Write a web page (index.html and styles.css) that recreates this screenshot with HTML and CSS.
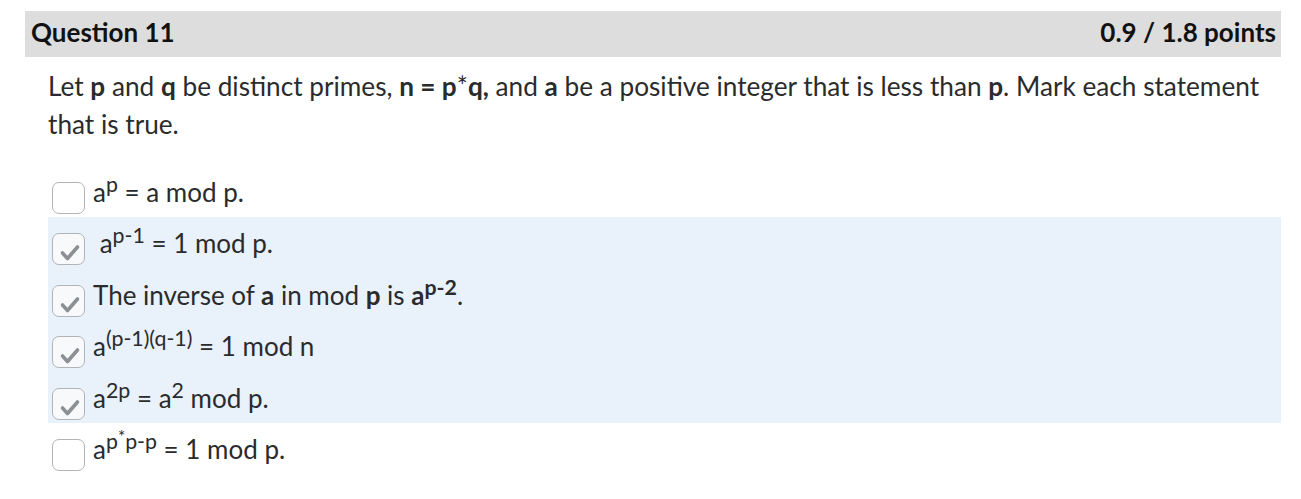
FILE: index.html
```html
<!DOCTYPE html>
<html>
<head>
<meta charset="utf-8">
<link rel="stylesheet" href="styles.css">
</head>
<body>
<div class="page">
  <div class="qhead">
    <span class="qtitle">Question 11</span>
    <span class="qpoints">0.9 / 1.8 points</span>
  </div>
  <div class="qbody">
    <p class="prompt">Let <b>p</b> and <b>q</b> be distinct primes, <b>n = p</b>*<b>q,</b> and <b>a</b> be a positive integer that is less than <b>p</b>. Mark each statement that is true.</p>
    <div class="options">
      <div class="opt">
        <span class="box"></span>
        <span class="lbl">a<sup>p</sup> = a mod p.</span>
      </div>
      <div class="opt sel">
        <span class="box"><svg viewBox="0 0 31 30" class="chk"><path d="M9.5 19 L14.5 24.5 L24.5 13" /></svg></span>
        <span class="lbl">&nbsp;a<sup>p-1</sup> = 1 mod p.</span>
      </div>
      <div class="opt sel">
        <span class="box"><svg viewBox="0 0 31 30" class="chk"><path d="M9.5 19 L14.5 24.5 L24.5 13" /></svg></span>
        <span class="lbl">The inverse of <b>a</b> in mod <b>p</b> is <b>a<sup>p-2</sup></b>.</span>
      </div>
      <div class="opt sel">
        <span class="box"><svg viewBox="0 0 31 30" class="chk"><path d="M9.5 19 L14.5 24.5 L24.5 13" /></svg></span>
        <span class="lbl">a<sup>(p-1)(q-1)</sup> = 1 mod n</span>
      </div>
      <div class="opt sel">
        <span class="box"><svg viewBox="0 0 31 30" class="chk"><path d="M9.5 19 L14.5 24.5 L24.5 13" /></svg></span>
        <span class="lbl">a<sup>2p</sup> = a<sup>2</sup> mod p.</span>
      </div>
      <div class="opt">
        <span class="box"></span>
        <span class="lbl">a<sup>p<span class="star">*</span>p-p</sup> = 1 mod p.</span>
      </div>
    </div>
  </div>
</div>
</body>
</html>
```

FILE: styles.css
```css
html, body {
  margin: 0;
  padding: 0;
  background: #ffffff;
}
body {
  font-family: Lato, "Noto Sans", sans-serif;
  color: #202122;
}
.page {
  padding: 11px 20px 0 25px;
}
.qhead {
  display: flex;
  justify-content: space-between;
  align-items: flex-start;
  height: 46px;
  box-sizing: border-box;
  background: #dddddd;
  padding: 6px 5px 0 6px;
  font-weight: 700;
  font-size: 26px;
  line-height: 31px;
  color: #111;
}
.qbody {
  padding-left: 23px;
}
.prompt {
  margin: 10px 0 0 0;
  font-size: 26.2px;
  line-height: 38px;
  color: #2a2b2c;
}
.options {
  margin-top: 22px;
}
.opt {
  display: flex;
  align-items: flex-start;
  height: 51.5px;
  box-sizing: border-box;
  padding: 16.5px 0 0 4px;
  font-size: 26px;
  color: #2a2b2c;
}
.opt.sel {
  background: #e9f1fb;
}
.box {
  flex: none;
  width: 33px;
  height: 32px;
  box-sizing: border-box;
  border: 1px solid #b1b4b8;
  border-radius: 7px;
  background: #fff;
  display: flex;
}
.sel .box {
  background: #f8f9fa;
}
.chk {
  width: 31px;
  height: 30px;
}
.chk path {
  fill: none;
  stroke: #8c8f93;
  stroke-width: 3.6;
  stroke-linecap: round;
  stroke-linejoin: round;
}
.lbl {
  margin-left: 8px;
  line-height: 20px;
  white-space: nowrap;
}
sup {
  font-size: 0.82em;
  line-height: 0;
  vertical-align: 10px;
}
.star {
  font-size: 0.8em;
  position: relative;
  top: -6px;
}
```
